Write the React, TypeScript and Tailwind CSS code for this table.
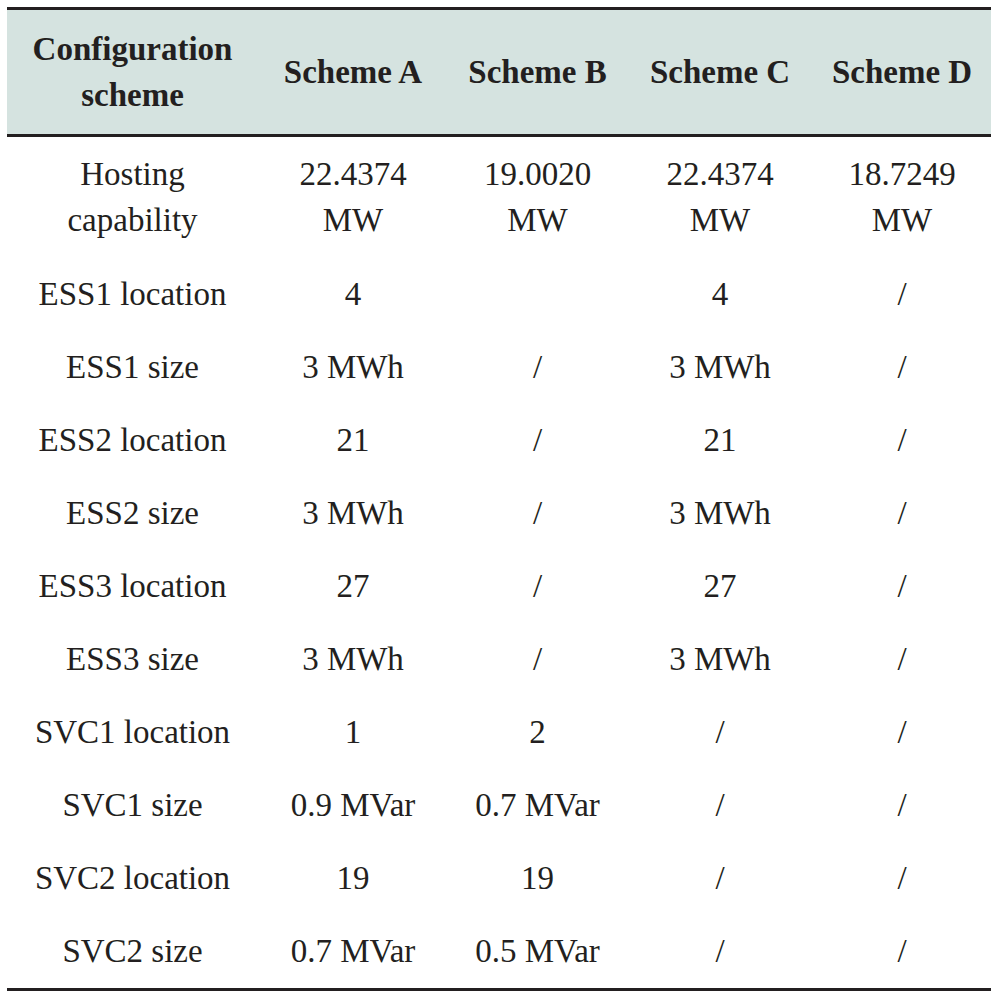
const cols = ["w-[251px]", "w-[190px]", "w-[179px]", "w-[186px]", "w-[178px]"];

const header = ["Configuration scheme", "Scheme A", "Scheme B", "Scheme C", "Scheme D"];

const rows: string[][] = [
  ["Hosting capability", "22.4374 MW", "19.0020 MW", "22.4374 MW", "18.7249 MW"],
  ["ESS1 location", "4", "", "4", "/"],
  ["ESS1 size", "3 MWh", "/", "3 MWh", "/"],
  ["ESS2 location", "21", "/", "21", "/"],
  ["ESS2 size", "3 MWh", "/", "3 MWh", "/"],
  ["ESS3 location", "27", "/", "27", "/"],
  ["ESS3 size", "3 MWh", "/", "3 MWh", "/"],
  ["SVC1 location", "1", "2", "/", "/"],
  ["SVC1 size", "0.9 MVar", "0.7 MVar", "/", "/"],
  ["SVC2 location", "19", "19", "/", "/"],
  ["SVC2 size", "0.7 MVar", "0.5 MVar", "/", "/"],
];

function Cell({ i, children, bold }: { i: number; children: React.ReactNode; bold?: boolean }) {
  return (
    <div
      className={`${cols[i]} shrink-0 flex items-center justify-center text-center px-2 ${bold ? "font-bold" : ""}`}
    >
      {children}
    </div>
  );
}

export default function App() {
  return (
    <div className="w-[1000px] h-[1002px] bg-white pt-[7px] pl-[7px] text-[#231f20] font-['Liberation_Serif',_'Times_New_Roman',_serif] text-[33px] leading-[46px]">
      <div className="w-[984px]">
        {/* header */}
        <div className="flex h-[130px] bg-[#d5e3e0] border-t-[3px] border-b-[3px] border-[#231f20]">
          {header.map((h, i) => (
            <Cell key={i} i={i} bold>
              {i === 0 ? (
                <span>
                  Configuration
                  <br />
                  scheme
                </span>
              ) : (
                h
              )}
            </Cell>
          ))}
        </div>

        {/* body */}
        <div className="border-b-[3px] border-[#231f20]">
          {rows.map((r, ri) => (
            <div key={ri} className={`flex ${ri === 0 ? "h-[120px]" : "h-[73.1px]"}`}>
              {r.map((c, ci) => (
                <Cell key={ci} i={ci}>
                  {ri === 0 ? (
                    <span>
                      {c.split(" ")[0]}
                      <br />
                      {c.split(" ")[1]}
                    </span>
                  ) : (
                    c
                  )}
                </Cell>
              ))}
            </div>
          ))}
        </div>
      </div>
    </div>
  );
}
